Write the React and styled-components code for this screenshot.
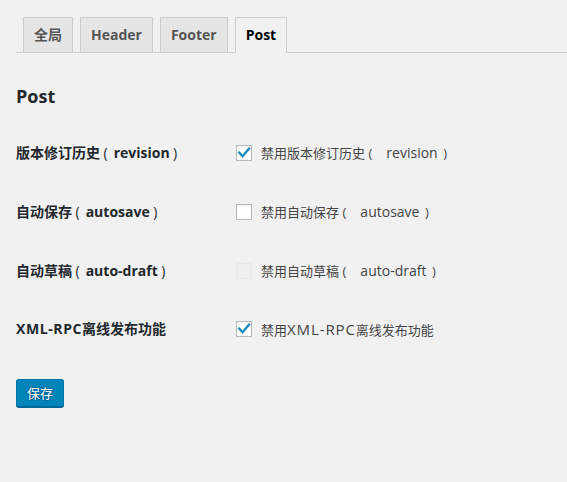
import React from "react";
import styled, { createGlobalStyle } from "styled-components";

const Global = createGlobalStyle`
  html, body { margin: 0; padding: 0; background: #f1f1f1; }
  body {
    font-family: "Open Sans", "Noto Sans CJK SC", sans-serif;
    font-size: 13px;
    color: #444;
  }
`;

const Wrap = styled.div`
  padding: 0 0 0 16px;
  width: 551px;
  height: 482px;
  overflow: hidden;
`;

const TabBar = styled.nav`
  display: flex;
  padding-top: 17px;
  padding-left: 7px;
  border-bottom: 1px solid #ccc;
  height: 35px;
  box-sizing: content-box;
  align-items: flex-start;
  gap: 7px;
`;

const Tab = styled.a`
  display: block;
  box-sizing: border-box;
  height: 36px;
  padding: 5px 10px;
  font-size: 14px;
  line-height: 24px;
  font-weight: 700;
  border: 1px solid #ccc;
  background: ${(p) => (p.$active ? "#f1f1f1" : "#e5e5e5")};
  border-bottom-color: ${(p) => (p.$active ? "#f1f1f1" : "#ccc")};
  color: ${(p) => (p.$active ? "#000" : "#555")};
  text-decoration: none;
  white-space: nowrap;
`;

const Heading = styled.h2`
  margin: 32px 0 0;
  font-size: 18px;
  line-height: 23px;
  font-weight: 700;
  color: #23282d;
`;

const Table = styled.div`
  margin-top: 16px;
  display: flex;
  flex-direction: column;
`;

const Row = styled.div`
  display: grid;
  grid-template-columns: 220px 1fr;
  align-items: center;
  height: 58.67px;
`;

const Label = styled.div`
  font-weight: 700;
  color: #23282d;
  font-size: 14px;
  line-height: 18px;
  white-space: nowrap;
`;

const Option = styled.label`
  display: flex;
  align-items: center;
  gap: 9px;
  color: #444;
  font-size: 13px;
  line-height: 18px;
  white-space: nowrap;
`;

const Latin = styled.span`
  font-size: ${(p) => (p.$caps && p.$wide ? "15px" : "14px")};
  letter-spacing: ${(p) => (p.$caps ? (p.$wide ? "0.9px" : "0.6px") : "0")};
`;

const Paren = styled.span`
  font-family: "Open Sans", sans-serif;
  font-weight: 400;
  margin-left: ${(p) => (p.$open ? "3.5px" : p.$wide ? "5.5px" : "3.5px")};
  margin-right: ${(p) => (p.$open ? (p.$wide ? "14px" : "6px") : "3px")};
`;

const Box = styled.span`
  box-sizing: border-box;
  width: 16px;
  height: 16px;
  border: 1px solid ${(p) => (p.$disabled ? "#e9e9e9" : "#b4b9be")};
  background: ${(p) => (p.$disabled ? "#efefef" : "#fff")};
  box-shadow: inset 0 1px 2px rgba(0, 0, 0, ${(p) => (p.$disabled ? 0 : 0.07)});
  display: flex;
  align-items: center;
  justify-content: center;
  flex: none;
`;

const Button = styled.button`
  margin-top: 20px;
  height: 28px;
  padding: 0 10px 1px;
  font-family: "Open Sans", "Noto Sans CJK SC", sans-serif;
  font-size: 13px;
  line-height: 26px;
  color: #fff;
  background: #0085ba;
  border: 1px solid #0073aa;
  border-bottom-color: #006799;
  border-radius: 3px;
  box-shadow: 0 1px 0 #006799;
  text-shadow: 0 -1px 1px #006799, 1px 0 1px #006799, 0 1px 1px #006799, -1px 0 1px #006799;
`;

const Check = () => (
  <svg width="14" height="14" viewBox="0 0 14 14">
    <path d="M2.2 6.6 L5.6 10.2 L12 2.6" fill="none" stroke="#1e8cbe" strokeWidth="2.4" strokeLinecap="square" />
  </svg>
);

function Rich({ text, wide }) {
  const parts = text.split(/(（|）|[A-Za-z][A-Za-z\-]*)/).filter(Boolean);
  return parts.map((s, i) => {
    if (s === "（") return <Paren key={i} $open $wide={wide}>(</Paren>;
    if (s === "）") return <Paren key={i} $wide={wide}>)</Paren>;
    if (/^[A-Za-z]/.test(s))
      return (
        <Latin key={i} $wide={wide} $caps={/[A-Z]/.test(s)}>
          {s}
        </Latin>
      );
    return <span key={i}>{s}</span>;
  });
}

const rows = [
  { label: "版本修订历史（revision）", text: "禁用版本修订历史（revision）", checked: true },
  { label: "自动保存（autosave）", text: "禁用自动保存（autosave）", checked: false },
  { label: "自动草稿（auto-draft）", text: "禁用自动草稿（auto-draft）", checked: false, disabled: true },
  { label: "XML-RPC离线发布功能", text: "禁用XML-RPC离线发布功能", checked: true },
];

export default function App() {
  return (
    <>
      <Global />
      <Wrap>
        <TabBar>
          <Tab>全局</Tab>
          <Tab>Header</Tab>
          <Tab>Footer</Tab>
          <Tab $active>Post</Tab>
        </TabBar>
        <Heading>Post</Heading>
        <Table>
          {rows.map((r) => (
            <Row key={r.label}>
              <Label>
                <Rich text={r.label} />
              </Label>
              <Option>
                <Box $disabled={r.disabled}>{r.checked && <Check />}</Box>
                <span>
                  <Rich text={r.text} wide />
                </span>
              </Option>
            </Row>
          ))}
        </Table>
        <Button>保存</Button>
      </Wrap>
    </>
  );
}
